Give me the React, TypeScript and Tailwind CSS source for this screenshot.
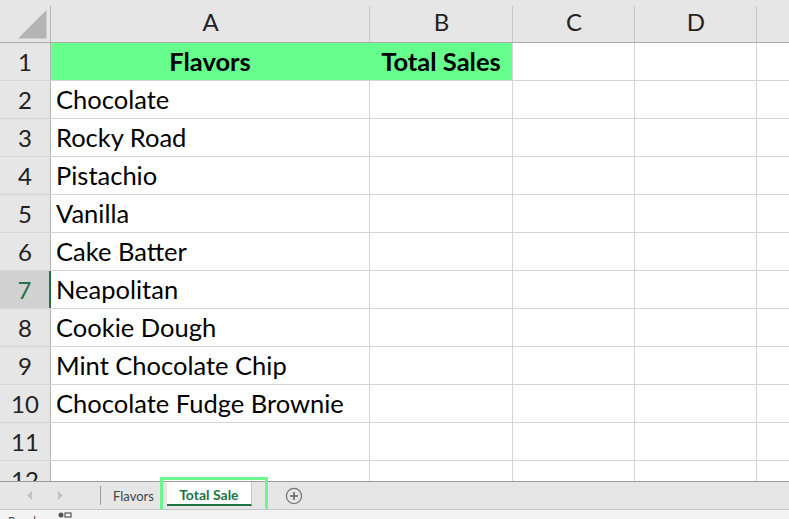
import React from "react";

const rows: { a: string; b: string }[] = [
  { a: "Flavors", b: "Total Sales" },
  { a: "Chocolate", b: "" },
  { a: "Rocky Road", b: "" },
  { a: "Pistachio", b: "" },
  { a: "Vanilla", b: "" },
  { a: "Cake Batter", b: "" },
  { a: "Neapolitan", b: "" },
  { a: "Cookie Dough", b: "" },
  { a: "Mint Chocolate Chip", b: "" },
  { a: "Chocolate Fudge Brownie", b: "" },
  { a: "", b: "" },
  { a: "", b: "" },
];

const font = { fontFamily: "Lato, 'Open Sans', sans-serif" };

export default function App() {
  return (
    <div className="w-[789px] h-[519px] overflow-hidden flex flex-col bg-white" style={font}>
      <div className="h-[481px] overflow-hidden flex flex-col shrink-0">
        {/* column header */}
        <div className="flex h-[43px] shrink-0 bg-[#e6e6e6] border-b border-[#ababab]">
          <div className="w-[51px] shrink-0 relative">
            <div className="absolute right-0 top-[6px] bottom-0 w-px bg-[#b5b5b5]" />
            <svg className="absolute left-[18px] top-[10px]" width="29" height="29" viewBox="0 0 29 29">
              <polygon points="0,28.5 28.5,28.5 28.5,0" fill="#b4b4b4" />
            </svg>
          </div>
          {[
            { l: "A", w: "w-[319px]" },
            { l: "B", w: "w-[143px]" },
            { l: "C", w: "w-[122px]" },
            { l: "D", w: "w-[122px]" },
          ].map((c) => (
            <div key={c.l} className={`${c.w} shrink-0 relative flex items-center justify-center text-[24px] text-[#222] pt-[2px]`}>
              {c.l}
              <div className="absolute right-0 top-[6px] bottom-0 w-px bg-[#c6c6c6]" />
            </div>
          ))}
          <div className="flex-1" />
        </div>
        {rows.map((r, i) => {
          const n = i + 1;
          const sel = n === 7;
          const head = n === 1;
          return (
            <div key={n} className="flex h-[38px] shrink-0 border-b border-[#d4d4d4]">
              <div
                className={`w-[51px] shrink-0 flex items-center justify-center text-[24px] border-r ${
                  sel ? "bg-[#d2d2d2] text-[#217346] border-[#217346]" : "bg-[#e6e6e6] text-[#222] border-[#b5b5b5]"
                } ${sel ? "border-r-2" : ""}`}
              >
                {n}
              </div>
              <div
                className={`w-[319px] shrink-0 flex items-center text-[25.5px] text-black whitespace-nowrap border-r ${
                  head ? "bg-[#66ff8e] justify-center font-bold border-[#66ff8e]" : "pl-[5px] border-[#d4d4d4]"
                } ${sel ? "w-[318px]" : ""}`}
              >
                {r.a}
              </div>
              <div
                className={`w-[143px] shrink-0 flex items-center justify-center text-[25.5px] text-black whitespace-nowrap border-r border-[#d4d4d4] ${
                  head ? "bg-[#66ff8e] font-bold" : ""
                }`}
              >
                {r.b}
              </div>
              <div className="w-[122px] shrink-0 border-r border-[#d4d4d4]" />
              <div className="w-[122px] shrink-0 border-r border-[#d4d4d4]" />
              <div className="flex-1" />
            </div>
          );
        })}
      </div>
      {/* sheet tabs */}
      <div className="h-[28px] shrink-0 bg-[#e6e6e6] border-t border-[#9b9b9b] flex items-stretch relative">
        <div className="w-[100px] flex items-center shrink-0">
          <svg className="ml-[27px]" width="6" height="9" viewBox="0 0 6 9">
            <polygon points="5,0 5,9 0,4.5" fill="#c2c2c2" />
          </svg>
          <svg className="ml-[24px]" width="6" height="9" viewBox="0 0 6 9">
            <polygon points="1,0 1,9 6,4.5" fill="#c2c2c2" />
          </svg>
        </div>
        <div className="w-px bg-[#9b9b9b] my-[4px] shrink-0" />
        <div className="flex items-center px-[12px] text-[13px] text-[#444] shrink-0 pt-[2px]">Flavors</div>
        <div className="relative shrink-0 ml-[1px] mb-[3px] w-[85px] bg-white flex items-center justify-center pt-[2px] text-[14px] font-bold text-[#217346] border-b-2 border-[#217346] border-r border-r-[#c6c6c6]">
          Total Sale
        </div>
        <div className="absolute left-[160px] top-[-5px] w-[108px] h-[35px] border-[3px] border-[#6af88e]" />
        <div className="flex items-center ml-[33px]">
          <svg width="18" height="18" viewBox="0 0 18 18">
            <circle cx="9" cy="9" r="7.6" fill="none" stroke="#777" strokeWidth="1.3" />
            <path d="M9 5v8M5 9h8" stroke="#666" strokeWidth="1.6" />
          </svg>
        </div>
      </div>
      {/* status bar */}
      <div className="h-[24px] shrink-0 bg-[#f3f3f3] border-t border-[#c6c6c6] flex items-start relative">
        <span className="ml-[8px] mt-[3px] text-[12px] text-[#444]" style={{ fontFamily: "'Segoe UI', 'Open Sans', sans-serif" }}>
          Ready
        </span>
        <svg className="absolute left-[58px] top-[2px]" width="14" height="12" viewBox="0 0 14 12">
          <circle cx="3" cy="3" r="2.5" fill="#555" />
          <rect x="7" y="1" width="6" height="4" fill="none" stroke="#555" strokeWidth="1.2" />
        </svg>
      </div>
    </div>
  );
}
